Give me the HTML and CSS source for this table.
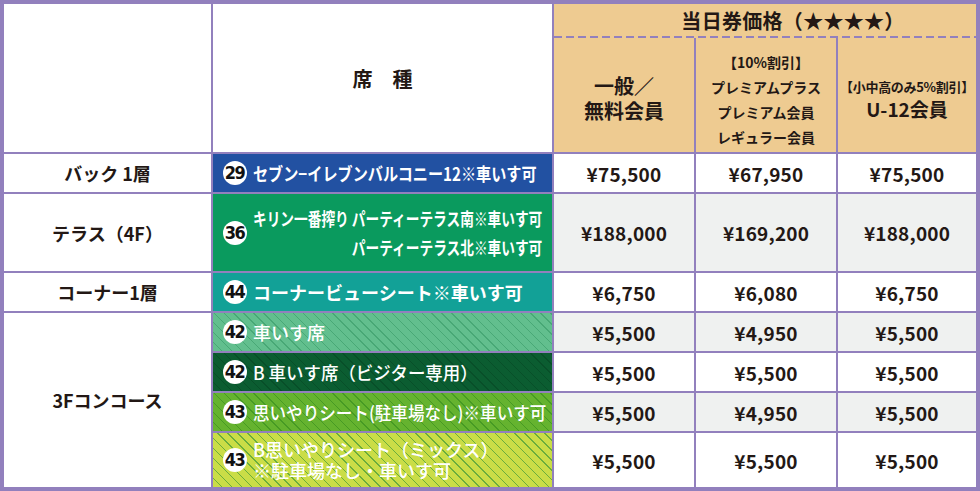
FILE: index.html
```html
<!DOCTYPE html>
<html lang="ja">
<head>
<meta charset="utf-8">
<title>当日券価格</title>
<link rel="stylesheet" href="styles.css">
</head>
<body>
<div class="price-table">
  <div class="head-blank"></div>
  <div class="head-seat">席　種</div>
  <div class="price-head">
    <div class="price-title">当日券価格（★★★★）</div>
    <div class="dash"></div>
    <div class="price-subs">
      <div class="sub sub-general"><span>一般／</span><span>無料会員</span></div>
      <div class="sub sub-premium"><span>【10%割引】</span><span>プレミアムプラス</span><span>プレミアム会員</span><span>レギュラー会員</span></div>
      <div class="sub sub-u12"><span class="small">【小中高のみ5%割引】</span><span class="big">U-12会員</span></div>
    </div>
  </div>

  <div class="label">バック 1層</div>
  <div class="seat s-blue"><span class="badge">29</span><span class="seat-text sq84">セブン−イレブンバルコニー12※車いす可</span></div>
  <div class="price">¥75,500</div>
  <div class="price">¥67,950</div>
  <div class="price">¥75,500</div>

  <div class="label">テラス（4F）</div>
  <div class="seat s-green"><span class="badge">36</span><span class="seat-text two-right"><span class="ln">キリン一番搾り パーティーテラス南※車いす可</span><span class="ln">パーティーテラス北※車いす可</span></span></div>
  <div class="price grey">¥188,000</div>
  <div class="price grey">¥169,200</div>
  <div class="price grey">¥188,000</div>

  <div class="label">コーナー1層</div>
  <div class="seat s-teal"><span class="badge">44</span><span class="seat-text">コーナービューシート※車いす可</span></div>
  <div class="price">¥6,750</div>
  <div class="price">¥6,080</div>
  <div class="price">¥6,750</div>

  <div class="label label-tall">3Fコンコース</div>
  <div class="seat s-mint med"><span class="badge">42</span><span class="seat-text">車いす席</span></div>
  <div class="price grey">¥5,500</div>
  <div class="price grey">¥4,950</div>
  <div class="price grey">¥5,500</div>

  <div class="seat s-dark med"><span class="badge">42</span><span class="seat-text sq97">B 車いす席（ビジター専用）</span></div>
  <div class="price">¥5,500</div>
  <div class="price">¥5,500</div>
  <div class="price">¥5,500</div>

  <div class="seat s-lime med"><span class="badge">43</span><span class="seat-text sq92">思いやりシート(駐車場なし)※車いす可</span></div>
  <div class="price grey">¥5,500</div>
  <div class="price grey">¥4,950</div>
  <div class="price grey">¥5,500</div>

  <div class="seat s-yellow med"><span class="badge">43</span><span class="seat-text two-left"><span class="ln">B思いやりシート（ミックス）</span><span class="ln">※駐車場なし・車いす可</span></span></div>
  <div class="price">¥5,500</div>
  <div class="price">¥5,500</div>
  <div class="price">¥5,500</div>
</div>
</body>
</html>
```

FILE: styles.css
```css
html, body {
  margin: 0;
  padding: 0;
  background: #ffffff;
}

body {
  font-family: "Noto Sans CJK JP", "Noto Sans", sans-serif;
  color: #231815;
}

.price-table {
  width: 980px;
  height: 491px;
  box-sizing: border-box;
  display: grid;
  grid-template-columns: 207px 339px 140px 140px 138px;
  grid-template-rows: 148px 38px 77px 38px 38px 38px 38px 54px;
  gap: 2px;
  padding: 4px;
  background: #9280bd;
}

.head-blank {
  background: #ffffff;
}

.head-seat {
  background: #ffffff;
  display: flex;
  align-items: center;
  justify-content: center;
  font-size: 20px;
  font-weight: 700;
}

.price-head {
  grid-column: 3 / 6;
  display: flex;
  flex-direction: column;
  background: #eecb91;
}

.price-title {
  height: 32px;
  display: flex;
  align-items: center;
  justify-content: center;
  padding-left: 56px;
  font-size: 20px;
  font-weight: 700;
  letter-spacing: 0.3px;
}

.dash {
  height: 2px;
  background: repeating-linear-gradient(90deg, #9280bd 0 8px, transparent 8px 12px);
}

.price-subs {
  flex: 1;
  display: grid;
  grid-template-columns: 140px 140px 138px;
  gap: 2px;
  background: #9280bd;
}

.sub {
  background: #eecb91;
  display: flex;
  flex-direction: column;
  align-items: center;
  justify-content: center;
  padding-top: 6px;
  font-weight: 700;
  white-space: nowrap;
}

.sub-general {
  font-size: 20px;
  line-height: 25px;
}

.sub-premium {
  font-size: 14px;
  line-height: 25px;
  padding-top: 10px;
}

.sub-u12 {
  line-height: 22px;
}

.sub-u12 .small {
  font-size: 13px;
  letter-spacing: -0.3px;
}

.sub-u12 .big {
  font-size: 19px;
}

.label {
  background: #ffffff;
  display: flex;
  align-items: center;
  justify-content: center;
  font-size: 18px;
  font-weight: 700;
}

.label-tall {
  grid-row: span 4;
}

.price {
  background: #ffffff;
  display: flex;
  align-items: center;
  justify-content: center;
  font-size: 19px;
  font-weight: 700;
  letter-spacing: 0.2px;
}

.price.grey {
  background: #eff1f0;
}

.seat {
  display: flex;
  align-items: center;
  gap: 6px;
  padding: 0 9px 0 10px;
  color: #ffffff;
  font-size: 18px;
  font-weight: 700;
  white-space: nowrap;
  overflow: hidden;
}

.seat.med {
  font-weight: 500;
}

.badge {
  flex: none;
  width: 24px;
  height: 24px;
  border-radius: 50%;
  background: #ffffff;
  color: #111111;
  display: flex;
  align-items: center;
  justify-content: center;
  font-family: "DejaVu Sans Condensed", "Liberation Sans Narrow", "Roboto", sans-serif;
  font-stretch: condensed;
  font-weight: 700;
  font-size: 18px;
  letter-spacing: -1.5px;
  text-indent: -1px;
  line-height: 1;
}

.seat-text {
  display: inline-block;
  flex: none;
  transform-origin: left center;
}

.sq84 { transform: scaleX(0.84); }
.sq97 { transform: scaleX(0.97); }
.sq92 { transform: scaleX(0.92); }

.two-right {
  display: flex;
  flex-direction: column;
  align-items: flex-end;
  line-height: 29px;
  transform: scaleX(0.76);
  transform-origin: left center;
}

.two-left {
  display: flex;
  flex-direction: column;
  line-height: 21px;
}

.s-blue { background: #2251a2; }
.s-green { background: #0a9a5e; }
.s-teal { background: #12a197; }

.s-mint {
  background: repeating-linear-gradient(45deg, #62bf8e 0 6px, #48a876 6px 7px);
}

.s-dark {
  background: repeating-linear-gradient(45deg, #0b5d31 0 6px, #084f29 6px 7px);
}

.s-lime {
  background: repeating-linear-gradient(45deg, #65b32f 0 6px, #479a24 6px 7px);
}

.s-yellow {
  background: repeating-linear-gradient(45deg, #cadd47 0 6px, #6aae3c 6px 7px);
}
```
